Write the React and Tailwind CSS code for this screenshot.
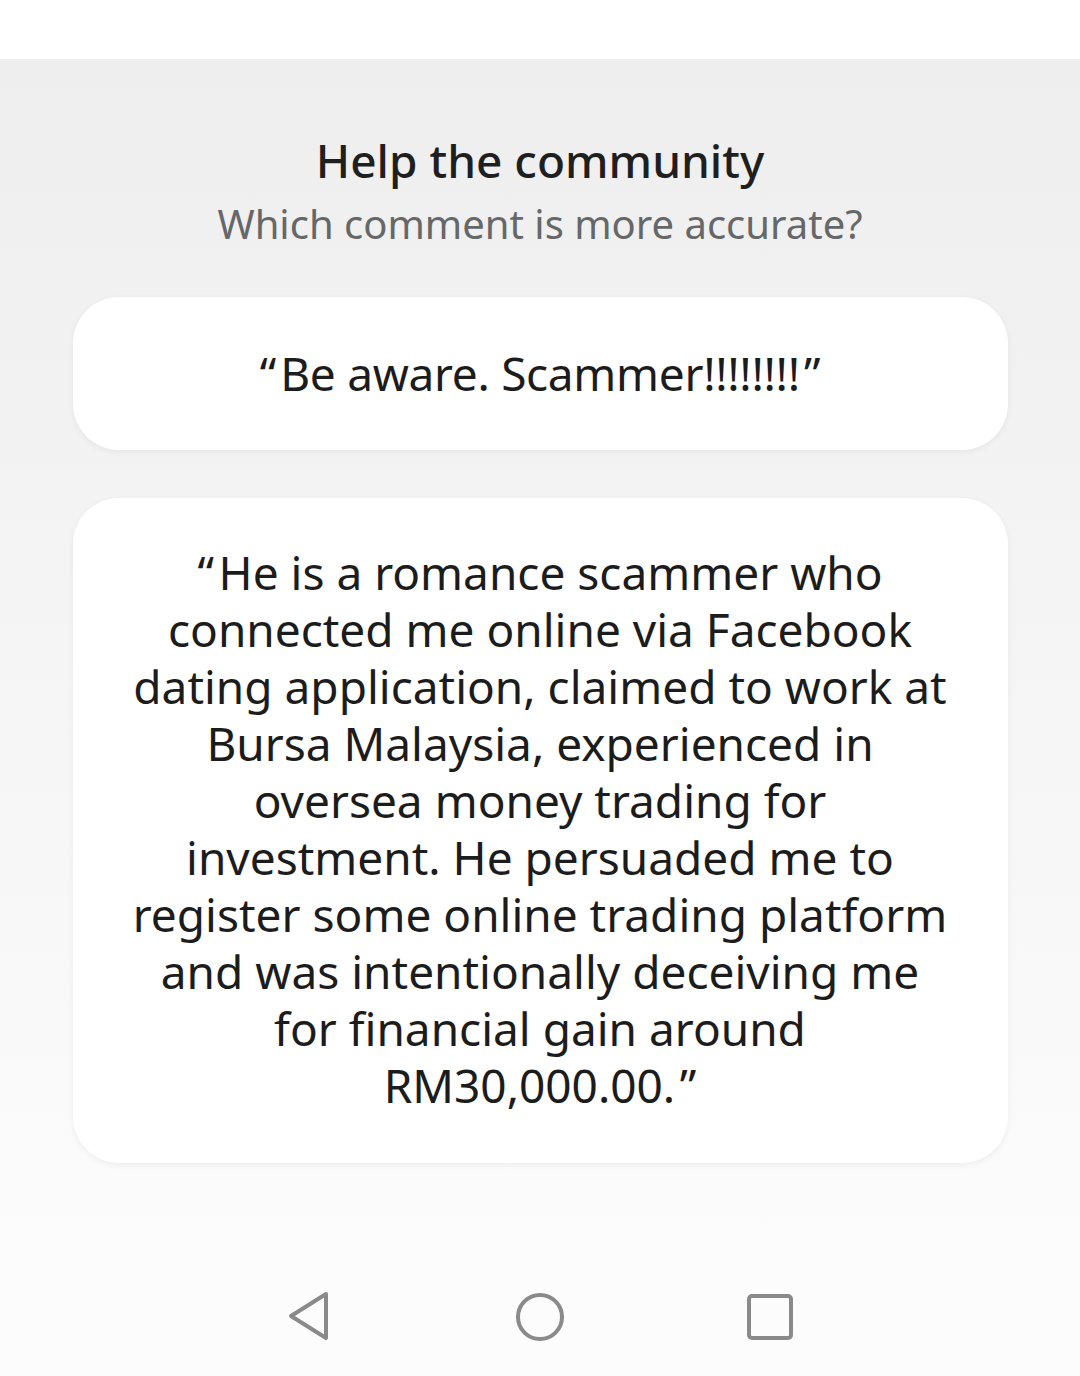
import React from "react";

const lines = [
  "\u201C\u200AHe is a romance scammer who",
  "connected me online via Facebook",
  "dating application, claimed to work at",
  "Bursa Malaysia, experienced in",
  "oversea money trading for",
  "investment. He persuaded me to",
  "register some online trading platform",
  "and was intentionally deceiving me",
  "for financial gain around",
  "RM30,000.00.\u200A\u201D",
];

export default function App() {
  return (
    <div
      className="w-[1080px] h-[1376px] flex flex-col bg-white overflow-hidden"
      style={{ fontFamily: "'Noto Sans', sans-serif" }}
    >
      <div className="h-[59px] bg-white shrink-0" />
      <div className="flex-1 flex flex-col items-center bg-gradient-to-b from-[#eeeeee] to-[#fcfcfc]">
        <div className="mt-[73px] text-[46px] leading-[56px] text-[#1f1f1f] font-medium">Help the community</div>
        <div className="mt-[12px] text-[40px] leading-[48px] text-[#666769]">Which comment is more accurate?</div>
        <div className="mt-[49px] w-[935px] h-[153px] bg-white rounded-[46px] shadow-[0_2px_6px_rgba(0,0,0,0.06)] flex items-center justify-center">
          <span className="text-[46px] text-[#1c1c1c] tracking-[-0.3px]">{"\u201C\u200ABe aware. Scammer!!!!!!!!\u200A\u201D"}</span>
        </div>
        <div className="mt-[48px] w-[935px] h-[665px] bg-white rounded-[46px] shadow-[0_2px_6px_rgba(0,0,0,0.06)] flex flex-col items-center pt-[46px]">
          {lines.map((l, i) => (
            <div key={i} className="text-[46px] leading-[57px] text-[#1c1c1c] whitespace-nowrap">{l}</div>
          ))}
        </div>
      </div>
      <div className="h-[110px] shrink-0 bg-[#fcfcfc] flex items-center justify-center gap-[0px] pb-[8px]">
        <div className="w-[230px] flex justify-center">
          <svg width="48" height="52" viewBox="0 0 48 52" fill="none" stroke="#8a8a8a" strokeWidth="4" strokeLinejoin="round">
            <path d="M40 3 L5 25 L40 47 Z" />
          </svg>
        </div>
        <div className="w-[230px] flex justify-center">
          <svg width="52" height="52" viewBox="0 0 52 52" fill="none" stroke="#8a8a8a" strokeWidth="4">
            <circle cx="26" cy="26" r="22" />
          </svg>
        </div>
        <div className="w-[230px] flex justify-center">
          <svg width="48" height="48" viewBox="0 0 48 48" fill="none" stroke="#8a8a8a" strokeWidth="4">
            <rect x="3" y="3" width="42" height="42" rx="3" />
          </svg>
        </div>
      </div>
    </div>
  );
}
